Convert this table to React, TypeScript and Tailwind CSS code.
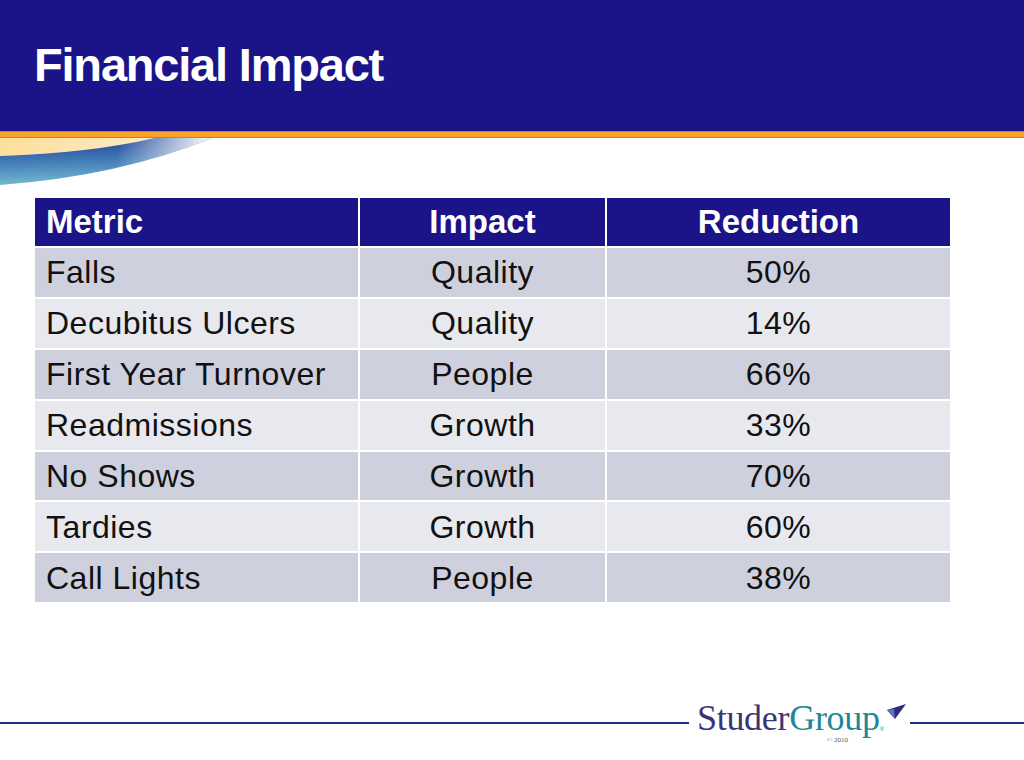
const rows = [
  { metric: "Falls", impact: "Quality", reduction: "50%" },
  { metric: "Decubitus Ulcers", impact: "Quality", reduction: "14%" },
  { metric: "First Year Turnover", impact: "People", reduction: "66%" },
  { metric: "Readmissions", impact: "Growth", reduction: "33%" },
  { metric: "No Shows", impact: "Growth", reduction: "70%" },
  { metric: "Tardies", impact: "Growth", reduction: "60%" },
  { metric: "Call Lights", impact: "People", reduction: "38%" },
];

function Swoosh() {
  return (
    <svg width="230" height="48" viewBox="0 0 230 48" className="block">
      <defs>
        <linearGradient id="cream" x1="0" y1="0" x2="1" y2="0">
          <stop offset="0" stopColor="#fddf9c" />
          <stop offset="1" stopColor="#fdebc4" />
        </linearGradient>
        <linearGradient id="band" x1="0" y1="0" x2="0.1" y2="1">
          <stop offset="0" stopColor="#1f3a92" />
          <stop offset="0.5" stopColor="#427ab6" />
          <stop offset="1" stopColor="#72bad0" />
        </linearGradient>
        <linearGradient id="fade" x1="0" y1="0" x2="1" y2="0">
          <stop offset="0.55" stopColor="#ffffff" stopOpacity="0" />
          <stop offset="1" stopColor="#ffffff" stopOpacity="1" />
        </linearGradient>
      </defs>
      <path d="M0 0 L155 0 Q 90 15 0 18 Z" fill="url(#cream)" />
      <path d="M0 18 Q 90 15 155 0 L212 0 Q 120 38 0 47 Z" fill="url(#band)" />
      <path d="M0 18 Q 90 15 155 0 L212 0 Q 120 38 0 47 Z" fill="url(#fade)" />
    </svg>
  );
}

function Mark() {
  return (
    <svg width="24" height="19" viewBox="0 0 24 19" className="block mt-[2px]">
      <polygon points="3,8 22,2 11,17" fill="#2d2a80" />
      <polygon points="3,8 10,7 11,17" fill="#5a74b8" />
    </svg>
  );
}

export default function App() {
  return (
    <div className="w-[1024px] h-[760px] bg-white overflow-hidden [font-family:'Liberation_Sans',Arial,sans-serif]">
      <div className="h-[131px] bg-[#1a1488] pl-[34px] pt-[41px]">
        <h1 className="text-[47px] leading-[48px] tracking-[-1.2px] font-bold text-white">Financial Impact</h1>
      </div>
      <div className="h-[7px] bg-[#f8a228] border-t border-b border-[#c9801e]" />
      <Swoosh />

      <div className="ml-[35px] mt-[12px] w-[915px] grid grid-cols-[323px_245px_343px] gap-[2px] text-[32px] tracking-[0.5px]">
        <div className="h-[48px] bg-[#1a1488] text-white font-bold text-[33px] tracking-normal flex items-center pl-[11px]">Metric</div>
        <div className="h-[48px] bg-[#1a1488] text-white font-bold text-[33px] tracking-normal flex items-center justify-center">Impact</div>
        <div className="h-[48px] bg-[#1a1488] text-white font-bold text-[33px] tracking-normal flex items-center justify-center">Reduction</div>
        {rows.map((r, i) => {
          const bg = i % 2 === 0 ? "bg-[#cfd0dd]" : "bg-[#e8e8ef]";
          return [
            <div key={r.metric + "a"} className={`h-[48.9px] ${bg} text-[#111] flex items-center pl-[11px]`}>{r.metric}</div>,
            <div key={r.metric + "b"} className={`h-[48.9px] ${bg} text-[#111] flex items-center justify-center`}>{r.impact}</div>,
            <div key={r.metric + "c"} className={`h-[48.9px] ${bg} text-[#111] flex items-center justify-center`}>{r.reduction}</div>,
          ];
        })}
      </div>

      {/* footer logo */}
      <div className="mt-[98px] flex items-start">
        <div className="w-[689px] h-[2px] bg-[#262a80] mt-[22px]" />
        <div className="relative ml-[8px] [font-family:'Liberation_Serif','Times_New_Roman',serif] text-[36px] leading-[36px] tracking-[-0.3px]">
          <span className="text-[#3a3676]">Studer</span>
          <span className="text-[#1f8797]">Group</span>
          <span className="absolute left-[130px] top-[37px] text-[7px] leading-[7px] text-[#555] tracking-normal">© 2010</span>
        </div>
        <span className="text-[6px] leading-[6px] text-[#1f8797] mt-[26px]">®</span>
        <Mark />
        <div className="flex-1 h-[2px] bg-[#262a80] mt-[22px] ml-[2px]" />
      </div>
    </div>
  );
}
